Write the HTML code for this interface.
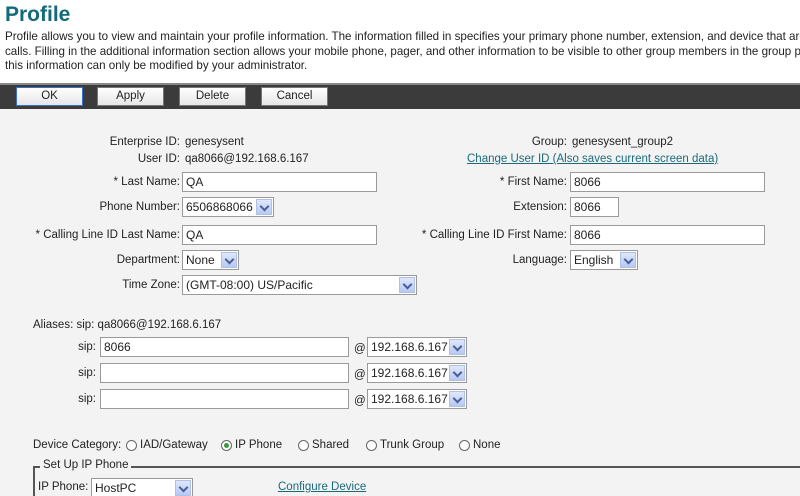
<!DOCTYPE html>
<html><head><meta charset="utf-8"><style>
*{margin:0;padding:0;box-sizing:border-box}
html,body{width:800px;height:496px;overflow:hidden}
body{background:#fff;font-family:"Liberation Sans",Arial,sans-serif;font-size:11.5px;color:#222;position:relative}
.a{position:absolute;white-space:nowrap}
h1{position:absolute;left:5px;top:3px;font-size:21px;font-weight:bold;color:#136a78}
.desc{position:absolute;left:5px;top:30px;line-height:14.7px;font-size:11.6px;white-space:nowrap}
.bar{position:absolute;left:0;top:83px;width:800px;height:26px;background:#3b3b3b;border-top:2px solid #888}
.btn{position:absolute;top:87px;height:19px;background:linear-gradient(#fff,#e6e6e6);border:1px solid #777;text-align:center;font-size:11.5px;line-height:17px}
.content{position:absolute;left:0;top:109px;width:800px;height:387px;background:#f3f3f3}
.r{position:absolute;text-align:right;white-space:nowrap;line-height:20px}
.in{position:absolute;height:20px;background:#fff;border:1px solid #9a9a9a;font-size:12px;line-height:18px;padding-left:3px;white-space:nowrap;overflow:hidden}
.sel{position:absolute;height:20px;background:#fff;border:1px solid #9a9a9a;font-size:12px;line-height:18px;padding-left:3px;white-space:nowrap;overflow:hidden}
.sel i{position:absolute;right:1px;top:1px;width:16px;height:16px;background:linear-gradient(#dfe8fb,#b7c9f1);border:1px solid #b0c0e8}
.sel i:after{content:"";position:absolute;left:4px;top:3px;width:5px;height:5px;border-right:2px solid #4a5f9a;border-bottom:2px solid #4a5f9a;transform:rotate(45deg)}
a{color:#1a6a7a;text-decoration:underline}
.rad{position:absolute;top:440px;width:11px;height:11px;border:1px solid #666;border-radius:50%;background:#fff}
.rad.on:after{content:"";position:absolute;left:2px;top:2px;width:5px;height:5px;border-radius:50%;background:#3a9a3a}
.dl{position:absolute;top:439px;white-space:nowrap}
</style></head><body>
<h1>Profile</h1>
<div class="desc">Profile allows you to view and maintain your profile information. The information filled in specifies your primary phone number, extension, and device that are<br>calls. Filling in the additional information section allows your mobile phone, pager, and other information to be visible to other group members in the group p<br>this information can only be modified by your administrator.</div>
<div class="bar"></div>
<div class="btn" style="left:16px;width:67px;border-color:#3a6fd0">OK</div>
<div class="btn" style="left:97px;width:67px">Apply</div>
<div class="btn" style="left:179px;width:67px">Delete</div>
<div class="btn" style="left:261px;width:67px">Cancel</div>
<div class="content"></div>

<div class="r" style="right:620px;top:132px">Enterprise ID:</div><div class="a" style="left:185px;top:136px">genesysent</div>
<div class="r" style="right:620px;top:149px">User ID:</div><div class="a" style="left:185px;top:153px">qa8066@192.168.6.167</div>
<div class="r" style="right:620px;top:172px">* Last Name:</div><div class="in" style="left:182px;top:172px;width:195px">QA</div>
<div class="r" style="right:620px;top:197px">Phone Number:</div><div class="sel" style="left:182px;top:197px;width:92px">6506868066<i></i></div>
<div class="r" style="right:620px;top:225px">* Calling Line ID Last Name:</div><div class="in" style="left:182px;top:225px;width:195px">QA</div>
<div class="r" style="right:620px;top:250px">Department:</div><div class="sel" style="left:182px;top:250px;width:57px">None<i></i></div>
<div class="r" style="right:620px;top:275px">Time Zone:</div><div class="sel" style="left:182px;top:275px;width:235px">(GMT-08:00) US/Pacific<i></i></div>

<div class="r" style="right:233px;top:132px">Group:</div><div class="a" style="left:572px;top:136px">genesysent_group2</div>
<div class="a" style="left:467px;top:153px"><a>Change User ID (Also saves current screen data)</a></div>
<div class="r" style="right:233px;top:172px">* First Name:</div><div class="in" style="left:570px;top:172px;width:195px">8066</div>
<div class="r" style="right:233px;top:197px">Extension:</div><div class="in" style="left:570px;top:197px;width:49px">8066</div>
<div class="r" style="right:233px;top:225px">* Calling Line ID First Name:</div><div class="in" style="left:570px;top:225px;width:195px">8066</div>
<div class="r" style="right:233px;top:250px">Language:</div><div class="sel" style="left:570px;top:250px;width:68px">English<i></i></div>

<div class="a" style="left:33px;top:319px">Aliases: sip: qa8066@192.168.6.167</div>
<div class="r" style="right:704px;top:337px">sip:</div><div class="in" style="left:100px;top:337px;width:249px">8066</div><div class="a" style="left:354px;top:343px">@</div><div class="sel" style="left:367px;top:337px;width:100px">192.168.6.167<i></i></div>
<div class="r" style="right:704px;top:363px">sip:</div><div class="in" style="left:100px;top:363px;width:249px"></div><div class="a" style="left:354px;top:369px">@</div><div class="sel" style="left:367px;top:363px;width:100px">192.168.6.167<i></i></div>
<div class="r" style="right:704px;top:389px">sip:</div><div class="in" style="left:100px;top:389px;width:249px"></div><div class="a" style="left:354px;top:395px">@</div><div class="sel" style="left:367px;top:389px;width:100px">192.168.6.167<i></i></div>

<div class="dl" style="left:33px">Device Category:</div>
<span class="rad" style="left:126px"></span><div class="dl" style="left:140px">IAD/Gateway</div>
<span class="rad on" style="left:221px"></span><div class="dl" style="left:235px">IP Phone</div>
<span class="rad" style="left:298px"></span><div class="dl" style="left:312px">Shared</div>
<span class="rad" style="left:366px"></span><div class="dl" style="left:380px">Trunk Group</div>
<span class="rad" style="left:459px"></span><div class="dl" style="left:473px">None</div>

<div class="a" style="left:33px;top:466px;width:767px;height:30px;border-top:2px solid #555;border-left:2px solid #555"></div>
<div class="a" style="left:40px;top:459px;background:#f3f3f3;padding:0 3px">Set Up IP Phone</div>
<div class="a" style="left:38px;top:481px">IP Phone:</div><div class="sel" style="left:91px;top:478px;width:102px">HostPC<i></i></div>
<div class="a" style="left:278px;top:481px"><a>Configure Device</a></div>
</body></html>
